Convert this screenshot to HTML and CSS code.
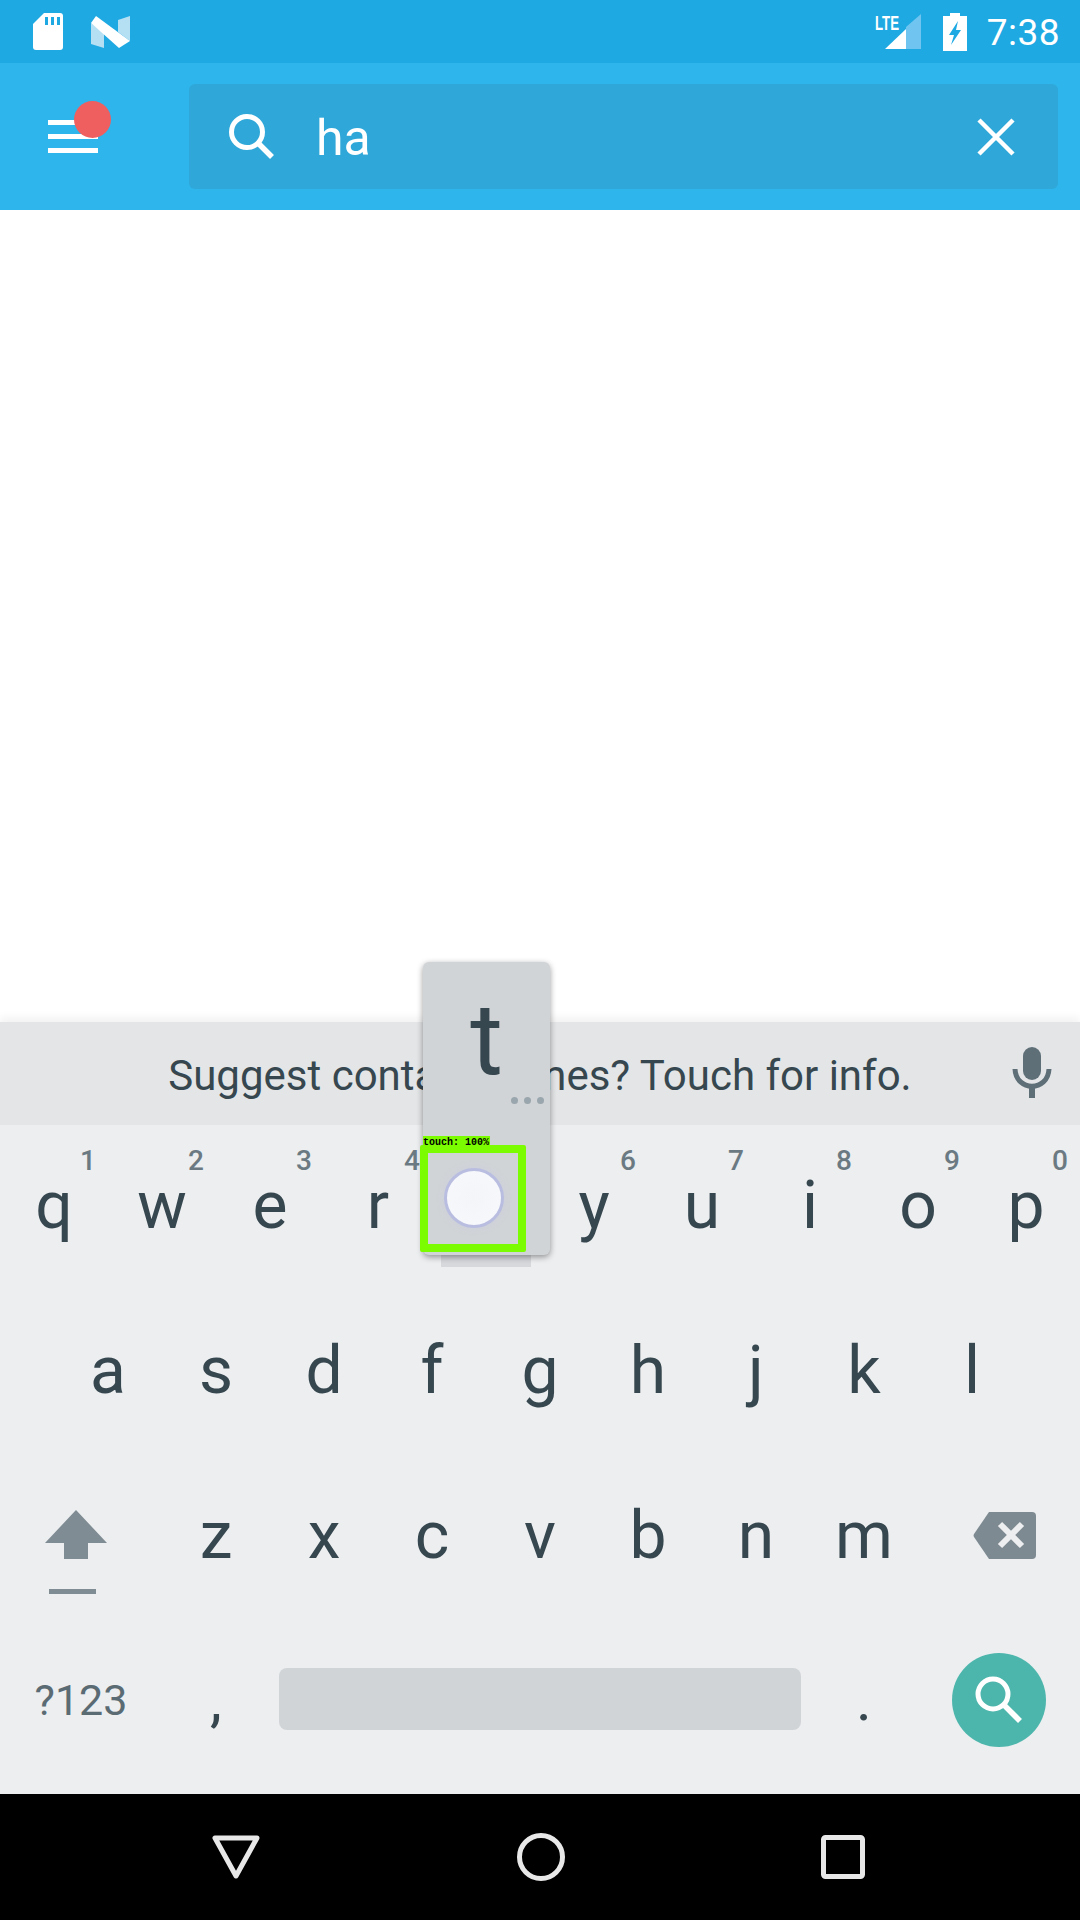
FILE: index.html
```html
<!DOCTYPE html>
<html lang="en">
<head>
  <meta charset="UTF-8">
  <title>Search</title>
  <link rel="stylesheet" href="styles.css">
</head>
<body>
  <div class="status-bar">
    <svg class="ic-sd" width="30" height="37" viewBox="0 0 30 37">
      <path d="M11 0H27a3 3 0 0 1 3 3V34a3 3 0 0 1-3 3H3a3 3 0 0 1-3-3V11Z" fill="#fff"/>
      <path d="M12 4h3v8h-3zM18 4h3v8h-3zM24 4h3v8h-3z" fill="#1ea9e3"/>
    </svg>
    <svg class="ic-n" width="39" height="32" viewBox="0 0 39 32">
      <path d="M0 7 13 16V32L0 28Z" fill="#b5dff3"/>
      <path d="M39 0V25L27 16V4Z" fill="#b5dff3"/>
      <path d="M5 0 39 25 28 32 0 7Z" fill="#fff"/>
    </svg>
    <div class="status-right">
      <svg class="ic-signal" width="48" height="37" viewBox="0 0 48 37">
        <text x="0" y="17" class="lte" textLength="24" lengthAdjust="spacingAndGlyphs">LTE</text>
        <path d="M10 36 31 16V36Z" fill="#fff"/>
        <path d="M31 14 46 1V36H31Z" fill="#6fc5ef"/>
      </svg>
      <svg class="ic-batt" width="24" height="38" viewBox="0 0 24 38">
        <path d="M7 0H17V3H24V38H0V3H7Z" fill="#fff"/>
        <path d="M15 8 6 22H11L8 32 18 17H13Z" fill="#1ea9e3"/>
      </svg>
      <span class="clock">7:38</span>
    </div>
  </div>

  <header class="app-bar">
    <div class="menu">
      <span class="menu-line"></span>
      <span class="menu-line"></span>
      <span class="menu-line"></span>
      <span class="menu-dot"></span>
    </div>
    <div class="search-field">
      <svg width="46" height="46" viewBox="0 0 46 46">
        <circle cx="18" cy="18" r="15.5" fill="none" stroke="#fff" stroke-width="5"/>
        <path d="M29 29 43 43" stroke="#fff" stroke-width="5.5"/>
      </svg>
      <span class="query">ha</span>
      <svg class="ic-clear" width="38" height="38" viewBox="0 0 38 38">
        <path d="M2 2 36 36M36 2 2 36" stroke="#fff" stroke-width="4.5"/>
      </svg>
    </div>
  </header>

  <main class="results"></main>

  <section class="keyboard">
    <div class="suggest">
      <span class="suggest-text">Suggest contact names? Touch for info.</span>
      <svg class="ic-mic" width="40" height="52" viewBox="0 0 40 52">
        <rect x="11" y="0" width="18" height="33" rx="9" fill="#5f6f78"/>
        <path d="M3 22C4 45 36 45 37 22" fill="none" stroke="#5f6f78" stroke-width="5"/>
        <path d="M20 38V51" stroke="#5f6f78" stroke-width="6"/>
      </svg>
    </div>

    <div class="row">
      <div class="key"><sup class="hint">1</sup>q</div>
      <div class="key"><sup class="hint">2</sup>w</div>
      <div class="key"><sup class="hint">3</sup>e</div>
      <div class="key"><sup class="hint">4</sup>r</div>
      <div class="key"><sup class="hint">5</sup>t</div>
      <div class="key"><sup class="hint">6</sup>y</div>
      <div class="key"><sup class="hint">7</sup>u</div>
      <div class="key"><sup class="hint">8</sup>i</div>
      <div class="key"><sup class="hint">9</sup>o</div>
      <div class="key"><sup class="hint">0</sup>p</div>
    </div>

    <div class="row">
      <div class="key">a</div>
      <div class="key">s</div>
      <div class="key">d</div>
      <div class="key">f</div>
      <div class="key">g</div>
      <div class="key">h</div>
      <div class="key">j</div>
      <div class="key">k</div>
      <div class="key">l</div>
    </div>

    <div class="row">
      <div class="key key-wide">
        <svg class="ic-shift" width="62" height="84" viewBox="0 0 62 84">
          <path d="M31 0 62 33H43V49H19V33H0Z" fill="#7f8c93"/>
          <rect x="4" y="79" width="47" height="5" fill="#7f8c93"/>
        </svg>
      </div>
      <div class="key">z</div>
      <div class="key">x</div>
      <div class="key">c</div>
      <div class="key">v</div>
      <div class="key">b</div>
      <div class="key">n</div>
      <div class="key">m</div>
      <div class="key key-wide">
        <svg class="ic-back" width="63" height="47" viewBox="0 0 63 47">
          <path d="M16 0H59a4 4 0 0 1 4 4V43a4 4 0 0 1-4 4H16L1 25a3 3 0 0 1 0-3Z" fill="#7e8a91"/>
          <path d="M27 12 49 34M49 12 27 34" stroke="#eceef0" stroke-width="6"/>
        </svg>
      </div>
    </div>

    <div class="row row-last">
      <div class="key key-wide key-sym">?123</div>
      <div class="key key-punct">,</div>
      <div class="key key-space"><span class="space-bar"></span></div>
      <div class="key key-punct">.</div>
      <div class="key key-wide">
        <span class="go">
          <svg width="48" height="48" viewBox="0 0 48 48">
            <circle cx="18" cy="18" r="15" fill="none" stroke="#fff" stroke-width="5"/>
            <path d="M29 29 45 45" stroke="#fff" stroke-width="5.5"/>
          </svg>
        </span>
      </div>
    </div>
  </section>

  <nav class="nav-bar">
    <svg width="48" height="44" viewBox="0 0 48 44">
      <path d="M3 3H45L24 41Z" fill="none" stroke="#e8e8e8" stroke-width="5" stroke-linejoin="round"/>
    </svg>
    <svg width="48" height="48" viewBox="0 0 48 48">
      <circle cx="24" cy="24" r="21.5" fill="none" stroke="#e8e8e8" stroke-width="5"/>
    </svg>
    <svg width="44" height="44" viewBox="0 0 44 44">
      <rect x="2.5" y="2.5" width="39" height="39" rx="2" fill="none" stroke="#e8e8e8" stroke-width="5"/>
    </svg>
  </nav>

  <!-- key preview and the touch detection box sit over the keyboard -->
  <div class="key-shadow"></div>
  <div class="preview">
    <span class="preview-letter">t</span>
    <span class="preview-dots"><i></i><i></i><i></i></span>
  </div>
  <div class="touch-box">
    <span class="touch-label">touch: 100%</span>
    <span class="touch-dot"></span>
  </div>
</body>
</html>
```

FILE: styles.css
```css
* {
  box-sizing: border-box;
}
html, body {
  margin: 0;
  padding: 0;
}
body {
  position: relative;
  width: 1080px;
  height: 1920px;
  overflow: hidden;
  display: flex;
  flex-direction: column;
  font-family: Roboto, "Liberation Sans", sans-serif;
  background: #fff;
}

.status-bar {
  height: 63px;
  flex: none;
  display: flex;
  align-items: flex-start;
  background: #1ea9e3;
  padding: 13px 20px 0 33px;
}
.ic-n {
  margin: 3px 0 0 28px;
}
.status-right {
  margin-left: auto;
  display: flex;
  align-items: flex-start;
}
.ic-signal {
  margin-right: 20px;
}
.lte {
  font-family: "Liberation Sans", sans-serif;
  font-weight: 700;
  font-size: 20px;
  fill: #fff;
}
.clock {
  margin-left: 20px;
  color: #fff;
  font-size: 37px;
  line-height: 40px;
  letter-spacing: 0.5px;
}

.app-bar {
  height: 147px;
  flex: none;
  display: flex;
  align-items: center;
  background: #2eb5ec;
  padding: 0 22px 0 48px;
}
.menu {
  position: relative;
  width: 50px;
  margin-right: 91px;
  display: flex;
  flex-direction: column;
  gap: 9px;
}
.menu-line {
  height: 5px;
  background: #fff;
}
.menu-dot {
  position: absolute;
  left: 26px;
  top: -19px;
  width: 37px;
  height: 37px;
  border-radius: 50%;
  background: #ef5f5f;
}
.search-field {
  flex: 1;
  height: 105px;
  display: flex;
  align-items: center;
  padding: 0 43px 0 40px;
  background: #2fa8d9;
  border-radius: 6px;
}
.query {
  margin: 2px 0 0 41px;
  color: #fff;
  font-size: 50px;
}
.ic-clear {
  margin-left: auto;
}

.results {
  flex: 1;
  background: #fff;
}

.keyboard {
  flex: none;
  padding-bottom: 10px;
  background: #eceef0;
  box-shadow: 0 -5px 8px rgba(0, 0, 0, 0.05);
  color: #37474f;
}
.suggest {
  height: 103px;
  padding-top: 3px;
  display: flex;
  align-items: center;
  justify-content: center;
  position: relative;
  background: #e3e5e7;
}
.suggest-text {
  font-size: 42px;
}
.ic-mic {
  position: absolute;
  right: 28px;
  top: 25px;
}
.row {
  height: 165px;
  display: flex;
  justify-content: center;
}
.row-last {
  margin-top: -1px;
}
.key {
  position: relative;
  width: 108px;
  display: flex;
  align-items: center;
  justify-content: center;
  font-size: 66px;
  padding-bottom: 4px;
}
.key-wide {
  width: 162px;
}
.key-space {
  width: 540px;
  padding: 0 9px 6px;
}
.hint {
  position: absolute;
  right: 12px;
  top: 20px;
  font-size: 28px;
  font-weight: 500;
  line-height: 32px;
  color: #6b7a82;
}
.ic-shift {
  margin: 33px 10px 0 0;
}
.ic-back {
  margin-left: 10px;
}
.key-sym {
  font-size: 43px;
  color: #5b6b73;
}
.key-punct {
  font-size: 60px;
}
.space-bar {
  width: 100%;
  height: 62px;
  border-radius: 8px;
  background: #d1d4d7;
}
.go {
  width: 94px;
  height: 94px;
  border-radius: 50%;
  background: #4db6ac;
  display: flex;
  align-items: center;
  justify-content: center;
}

.nav-bar {
  height: 126px;
  flex: none;
  display: flex;
  align-items: center;
  background: #000;
  padding: 0 215px 0 212px;
  justify-content: space-between;
}

.key-shadow {
  position: absolute;
  left: 441px;
  top: 1250px;
  width: 90px;
  height: 17px;
  background: #d6d8db;
}
.preview {
  position: absolute;
  left: 423px;
  top: 962px;
  width: 127px;
  height: 293px;
  background: #d1d4d7;
  border-radius: 6px;
  box-shadow: 0 2px 6px rgba(0, 0, 0, 0.4);
  color: #37474f;
  text-align: center;
}
.preview-letter {
  display: block;
  margin-top: 23px;
  font-size: 100px;
  line-height: 110px;
}
.preview-dots {
  position: absolute;
  right: 6px;
  top: 135px;
  display: flex;
  gap: 6px;
}
.preview-dots i {
  width: 7px;
  height: 7px;
  border-radius: 50%;
  background: #9aa6ad;
}
.touch-box {
  position: absolute;
  left: 420px;
  top: 1145px;
  width: 106px;
  height: 107px;
  border: 8px solid #7cfc00;
  border-radius: 2px;
}
.touch-label {
  position: absolute;
  left: -5px;
  top: -17px;
  width: 67px;
  height: 10px;
  background: #7cfc00;
  color: #000;
  font-family: "Liberation Mono", monospace;
  font-weight: 700;
  font-size: 10px;
  line-height: 13px;
  white-space: nowrap;
}
.touch-dot {
  position: absolute;
  left: 16px;
  top: 15px;
  width: 60px;
  height: 60px;
  border-radius: 50%;
  background: radial-gradient(circle, #f4f5f8 0%, #f7f8fb 85%, #e8e9f2 100%);
  border: 3px solid #b9bde0;
  box-shadow: 0 0 6px rgba(200, 204, 230, 0.5);
}
```
